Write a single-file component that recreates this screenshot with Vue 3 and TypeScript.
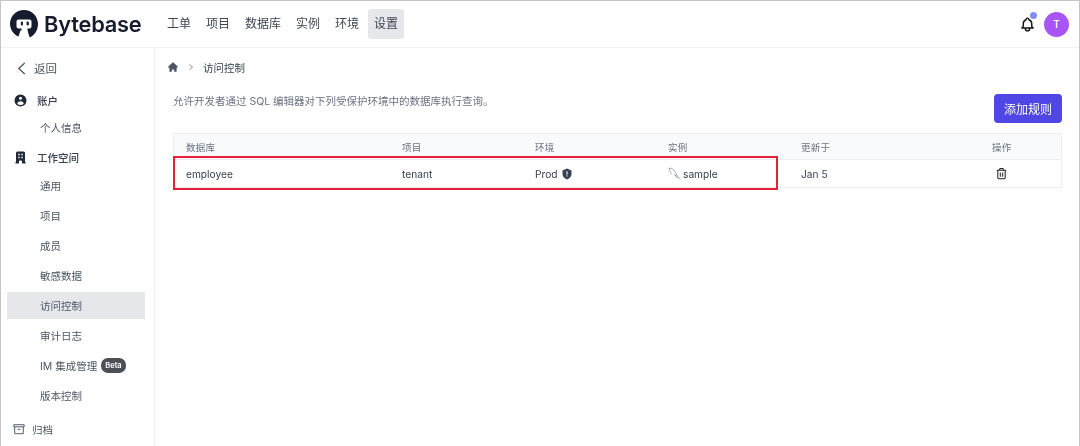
<script setup lang="ts">
const nav = ['工单', '项目', '数据库', '实例', '环境', '设置']
const workspace = ['通用', '项目', '成员', '敏感数据', '访问控制', '审计日志', 'IM 集成管理', '版本控制']
</script>

<template>
  <div class="page">
    <header class="top">
      <div class="brand">
        <svg class="logo" viewBox="0 0 28 28" width="28" height="28">
          <path fill="#161b2d" d="M14 0C6.300 0 0 6.200 0 13.800c0 5.700 3.500 10.700 8.500 12.800l2-6h7l2.200 6.800C24.900 25.300 28 20 28 13.800 28 6.200 21.700 0 14 0z" />
          <rect x="6.500" y="9.500" width="15" height="9" rx="2" fill="#fff" />
          <rect x="11.500" y="17" width="6" height="11" fill="#fff" />
          <rect x="10.800" y="11.500" width="2.200" height="4" rx="1.100" fill="#161b2d" />
          <rect x="16.600" y="11.500" width="2.200" height="4" rx="1.100" fill="#161b2d" />
        </svg>
        <span class="word">Bytebase</span>
      </div>
      <nav class="nav">
        <span v-for="n in nav" :key="n" class="nav-item" :class="{ on: n === '设置' }">{{ n }}</span>
      </nav>
      <div class="right">
        <div class="bell">
          <svg viewBox="0 0 24 24" width="17" height="17" fill="none" stroke="#111" stroke-width="2" stroke-linecap="round" stroke-linejoin="round">
            <path d="M15 17h5l-1.400-1.400A2 2 0 0 1 18 14.200V11a6 6 0 0 0-4-5.700V5a2 2 0 1 0-4 0v.3A6 6 0 0 0 6 11v3.200c0 .5-.2 1-.6 1.400L4 17h5m6 0v1a3 3 0 0 1-6 0v-1m6 0H9" />
          </svg>
          <i class="dot"></i>
        </div>
        <div class="avatar">T</div>
      </div>
    </header>
    <div class="body">
      <aside class="side">
        <div class="back">
          <svg viewBox="0 0 12 16" width="11" height="15" fill="none" stroke="#4b5563" stroke-width="1.400"><path d="M9.500 2 3 8l6.500 6" /></svg>
          <span>返回</span>
        </div>
        <div class="group">
          <svg viewBox="0 0 20 20" width="15" height="15" fill="#1f2937"><path fill-rule="evenodd" d="M18 10a8 8 0 11-16 0 8 8 0 0116 0zm-6-3a2 2 0 11-4 0 2 2 0 014 0zm-2 4a5 5 0 00-4.546 2.916A5.986 5.986 0 0010 16a5.986 5.986 0 004.546-2.084A5 5 0 0010 11z" /></svg>
          <span>账户</span>
        </div>
        <div class="item">个人信息</div>
        <div class="group second">
          <svg viewBox="0 0 20 20" width="15" height="15" fill="#1f2937"><path fill-rule="evenodd" d="M4 4a2 2 0 012-2h8a2 2 0 012 2v12a1 1 0 110 2h-3a1 1 0 01-1-1v-2a1 1 0 00-1-1H9a1 1 0 00-1 1v2a1 1 0 01-1 1H4a1 1 0 110-2V4zm3 1h2v2H7V5zm2 4H7v2h2V9zm2-4h2v2h-2V5zm2 4h-2v2h2V9z" /></svg>
          <span>工作空间</span>
        </div>
        <div v-for="w in workspace" :key="w" class="item" :class="{ on: w === '访问控制' }">
          <span>{{ w }}</span>
          <b v-if="w === 'IM 集成管理'" class="beta">Beta</b>
        </div>
        <div class="archive">
          <svg viewBox="0 0 14 14" width="12" height="12" fill="none" stroke="#4b5563" stroke-width="1.100"><path d="M1 2h12v2.500H1zM2 4.500V12.500h10V4.500M5.500 7.500h3" /></svg>
          <span>归档</span>
        </div>
      </aside>
      <main class="main">
        <div class="crumb">
          <svg viewBox="0 0 20 20" width="12" height="12" fill="#4b5563"><path d="M10.707 2.293a1 1 0 00-1.414 0l-7 7a1 1 0 001.414 1.414L4 10.414V17a1 1 0 001 1h2a1 1 0 001-1v-2a1 1 0 011-1h2a1 1 0 011 1v2a1 1 0 001 1h2a1 1 0 001-1v-6.586l.293.293a1 1 0 001.414-1.414l-7-7z" /></svg>
          <svg viewBox="0 0 8 10" width="6" height="8" fill="none" stroke="#6b7280" stroke-width="1.100"><path d="M2 1.500 6 5 2 8.500" /></svg>
          <span>访问控制</span>
        </div>
        <div class="intro">
          <p>允许开发者通过 SQL 编辑器对下列受保护环境中的数据库执行查询。</p>
          <button class="add" type="button">添加规则</button>
        </div>
        <div class="table-wrap">
          <div class="row head">
            <span>数据库</span><span>项目</span><span>环境</span><span>实例</span><span>更新于</span><span>操作</span>
          </div>
          <div class="row data">
            <span>employee</span>
            <span>tenant</span>
            <span class="cell">Prod
              <svg viewBox="0 0 20 20" width="12" height="12"><path fill="#374151" d="M10 1 2.500 4v5.500c0 4.500 3 7.800 7.500 9.500 4.500-1.700 7.500-5 7.500-9.500V4z" /><rect x="9.100" y="5.500" width="1.800" height="5.500" fill="#fff" /><rect x="9.100" y="12.300" width="1.800" height="1.800" fill="#fff" /></svg>
            </span>
            <span class="cell tight">
              <svg viewBox="0 0 14 14" width="14" height="14" fill="none" stroke="#7d9fb5" stroke-width="0.800" stroke-linecap="round"><path d="M1 1.200c2.600-.4 4.400.8 5.800 3 1 1.800 2 4.500 5.400 8" /><path d="M1.300 1.500c.2 2 .8 3.700 2.200 5.200" /><path d="M7 7.500c.6 1.200 1.400 2.400 2.400 3.400" stroke="#4b6b80" /></svg>
              sample
            </span>
            <span>Jan 5</span>
            <span class="trash">
              <svg viewBox="0 0 14 14" width="13" height="13" fill="none" stroke="#222" stroke-width="1.100" stroke-linejoin="round"><path d="M2 3.500h10M5 3.500V2.500a1 1 0 0 1 1-1h2a1 1 0 0 1 1 1v1M3 3.500v7.700A1.500 1.500 0 0 0 4.500 12.700h5A1.500 1.500 0 0 0 11 11.200V3.500M5.700 6v4.500M8.300 6v4.500" /></svg>
            </span>
          </div>
          <div class="mark"></div>
        </div>
      </main>
    </div>
  </div>
</template>

<style>
html, body { margin: 0; background: #fff; }
</style>

<style scoped>
.page {
  width: 1080px;
  height: 446px;
  box-sizing: border-box;
  border: 1px solid #c4c4c4;
  border-bottom: 0;
  overflow: hidden;
  display: flex;
  flex-direction: column;
  font-family: Inter, "Noto Sans CJK SC", sans-serif;
  color: #374151;
  font-size: 10.500px;
  filter: blur(0.350px);
}
.top {
  height: 46px;
  flex: none;
  display: flex;
  align-items: center;
  border-bottom: 1px solid #f0f1f3;
  box-sizing: content-box;
}
.brand { display: flex; align-items: center; margin-left: 9px; width: 151px; }
.logo { flex: none; }
.word { margin-left: 6px; font-size: 21.800px; font-weight: 600; color: #161b2d; letter-spacing: -0.200px; }
.nav { display: flex; gap: 3px; }
.nav-item { padding: 0 6px; height: 30px; line-height: 30px; font-size: 12px; border-radius: 3px; color: #3f4653; }
.nav-item.on { background: #e5e7eb; }
.right { margin-left: auto; display: flex; align-items: center; margin-right: 10px; gap: 8px; }
.bell { position: relative; width: 17px; height: 17px; }
.bell svg { display: block; }
.dot { position: absolute; right: -1px; top: -4px; width: 7px; height: 7px; border-radius: 50%; background: #818cf8; }
.avatar { width: 25px; height: 25px; border-radius: 50%; background: #a855f7; color: #fff; font-size: 10px; font-weight: 600; display: flex; align-items: center; justify-content: center; }
.body { flex: 1; display: flex; min-height: 0; }
.side {
  width: 153px;
  flex: none;
  box-sizing: content-box;
  border-right: 1px solid #eef0f2;
  background: #fff;
  padding-top: 10px;
}
.back { display: flex; align-items: center; gap: 7px; margin-left: 15px; height: 20px; font-size: 11.500px; color: #4b5563; }
.group { display: flex; align-items: center; gap: 9px; margin-left: 12px; height: 20px; margin-top: 12px; font-size: 10.500px; color: #374151; font-weight: 500; }
.group.second { margin-top: 8px; }
.item { display: flex; align-items: center; gap: 4px; margin: 0 9px 3px 6px; padding-left: 33px; height: 27px; color: #4b5563; }
.item.on { background: #e5e7eb; }
.group + .item { height: 24px; margin-bottom: 5px; margin-top: 5px; }
.group.second + .item { margin-top: 6px; }
.beta { background: #4b5058; color: #fff; font-size: 7.500px; font-weight: 600; border-radius: 7px; padding: 0 4px; height: 15px; line-height: 15px; }
.archive { display: flex; align-items: center; gap: 7px; margin: 10px 0 0 12px; height: 20px; color: #4b5563; }
.main { flex: 1; min-width: 0; padding: 10px 17px 0 18px; }
.crumb { display: flex; align-items: center; gap: 9px; height: 18px; margin-left: -6px; color: #374151; font-size: 10.500px; }
.intro { display: flex; justify-content: space-between; align-items: flex-start; height: 40px; margin-top: 17px; }
.intro p { margin: 0; padding-top: 1px; line-height: 16px; color: #6b7280; font-size: 10.500px; }
.add { margin-top: 1px; width: 68px; height: 29px; border: 0; border-radius: 4px; background: #4f46e5; color: #fff; font: inherit; font-size: 12px; padding: 0; }
.table-wrap { position: relative; border: 1px solid #eceef1; }
.row { display: grid; grid-template-columns: 216px 133px 133px 133px 191px 1fr; padding-left: 12px; align-items: center; }
.head { height: 25px; background: #f9fafb; border-bottom: 1px solid #eceef1; font-size: 9.500px; color: #6b7280; letter-spacing: 0.200px; }
.data { height: 27px; font-size: 10.200px; color: #374151; }
.cell { display: flex; align-items: center; gap: 3px; }
.cell.tight { gap: 1px; }
.trash { padding-left: 3px; display: flex; }
.mark { position: absolute; left: -1px; top: 22px; width: 605px; height: 34px; box-sizing: border-box; border: 2px solid #e8213a; }
</style>
